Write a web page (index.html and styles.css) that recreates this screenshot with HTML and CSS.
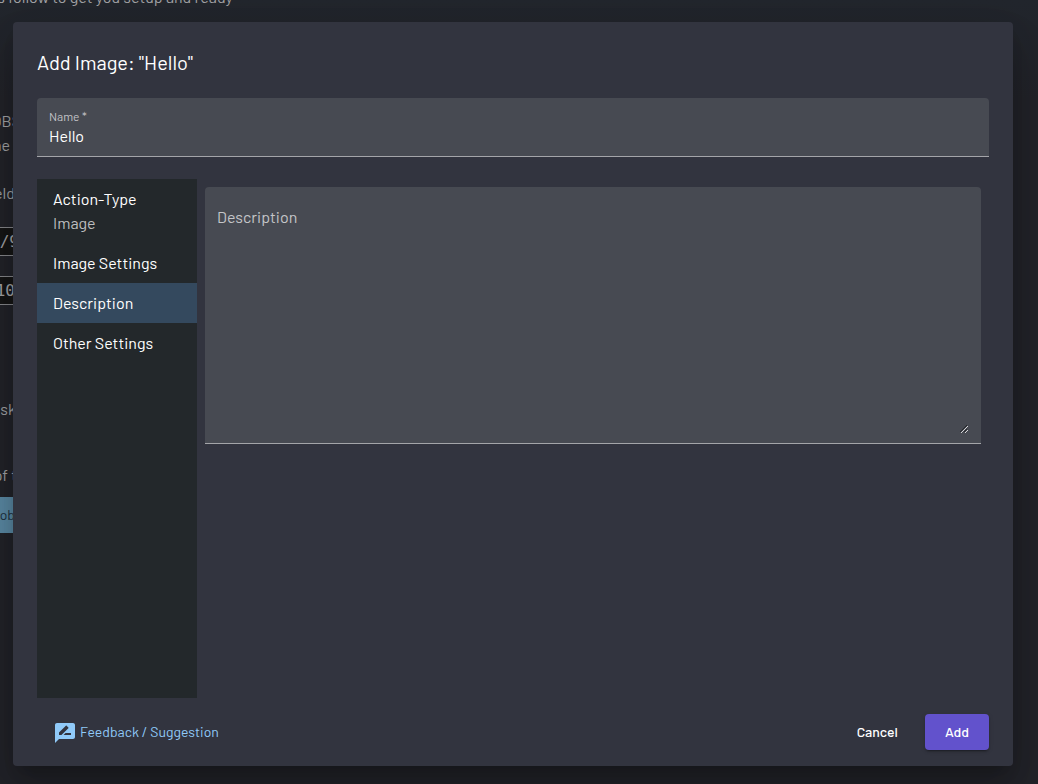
FILE: index.html
```
<!DOCTYPE html>
<html lang="en">
<head>
<meta charset="utf-8">
<meta name="viewport" content="width=device-width, initial-scale=1">
<title>Add Image</title>
<link rel="stylesheet" href="styles.css">
</head>
<body>
<div class="page" aria-hidden="true">
  <p class="intro">s follow to get you setup and ready</p>
  <div class="rail">
    <p class="line line-obs">OBS</p>
    <p class="line line-short">he</p>
    <p class="line line-gap">eld</p>
    <code class="code code-wide">/9</code>
    <code class="code">10</code>
    <p class="line line-task">sk</p>
    <p class="line line-of">of t</p>
    <span class="job">ob</span>
  </div>
</div>
<div class="overlay">
  <form class="dialog" role="dialog" aria-labelledby="title">
    <h1 class="title" id="title">Add Image: "Hello"</h1>
    <div class="field">
      <label class="field-label" for="name">Name *</label>
      <input class="field-input" id="name" type="text" value="Hello">
    </div>
    <div class="content">
      <nav class="menu">
        <button class="item" type="button">Action-Type<span class="item-sub">Image</span></button>
        <button class="item" type="button">Image Settings</button>
        <button class="item item-active" type="button">Description</button>
        <button class="item" type="button">Other Settings</button>
      </nav>
      <div class="panel">
        <div class="area">
          <textarea class="area-input" aria-label="Description" placeholder="Description"></textarea>
          <svg class="grip" viewBox="0 0 9 9" aria-hidden="true"><path d="M0 7L7 0M4 7L7 4" stroke="#25272b"/><path d="M1 8L8 1M5 8L8 5" stroke="#d5d5d7"/></svg>
        </div>
      </div>
    </div>
    <div class="actions">
      <a class="feedback" href="#feedback">
        <svg class="feedback-icon" viewBox="0 0 24 24" aria-hidden="true"><path fill="currentColor" d="M20 2H4c-1.100 0-2 .9-2 2v18l4-4h14c1.100 0 2-.9 2-2V4c0-1.100-.9-2-2-2zM6 14v-2.470l6.880-6.880c.2-.2.510-.2.710 0l1.770 1.770c.2.2.2.510 0 .710L8.470 14H6zm12 0h-7.500l2-2H18v2z"/></svg>
        <span class="feedback-text">Feedback / Suggestion</span>
      </a>
      <button class="button" type="button">Cancel</button>
      <button class="button button-primary" type="submit">Add</button>
    </div>
  </form>
</div>
</body>
</html>
```
FILE: styles.css
```
* { box-sizing: border-box; }
body {
  margin: 0;
  min-height: 100vh;
  overflow: hidden;
  background: #202127;
  color: #fff;
  font: 400 16px/24px Barlow, Roboto, sans-serif;
}
p, h1 { margin: 0; }
button, input, textarea { font: inherit; color: inherit; border: 0; background: none; }
.page {
  position: absolute;
  inset: 0;
  overflow: hidden;
  color: #a2a3a6;
  background: linear-gradient(#22262d, #222329 100px);
}
.intro { width: 233px; height: 9px; display: flex; align-items: flex-end; justify-content: flex-end; white-space: nowrap; }
.rail { width: 15px; padding-top: 100px; display: flex; flex-direction: column; align-items: flex-end; white-space: nowrap; }
.line-obs { margin-right: -6px; }
.line-short { margin-right: 5px; }
.line-gap { margin: 24px 0 22px; }
.code {
  height: 29px;
  width: 60px;
  margin-bottom: 20px;
  border: solid #85868a;
  border-width: 1px 0;
  background: #161616;
  font: 16px/28px "DejaVu Sans Mono", monospace;
  text-align: right;
}
.code-wide { margin-right: -4px; }
.line-task { margin: 72px -1px 0 0; }
.line-of { margin: 42px -2px 10px 0; }
.job { width: 60px; height: 36px; background: #5a89a4; color: #20313e; font-size: 14px; line-height: 36px; text-align: right; }
.overlay { position: relative; display: flex; min-height: 100vh; padding: 22px 25px 18px 13px; }
.dialog {
  flex: 1;
  display: flex;
  flex-direction: column;
  padding: 24px 24px 16px;
  border-radius: 4px;
  background: #32343f;
  box-shadow: 0 11px 15px -7px #0003, 0 24px 38px 3px #00000024, 0 9px 46px 8px #0000001f;
}
.title { margin: 0 0 20px; font-size: 20px; line-height: 32px; font-weight: 400; }
.field {
  display: flex;
  flex-direction: column;
  height: 59px;
  padding: 12px 12px 0;
  border-bottom: 1px solid #a4a5a9;
  border-radius: 4px 4px 0 0;
  background: #474a52;
}
.field-label { margin-bottom: 2px; font-size: 12px; line-height: 12px; color: #c4c5c8; }
.field-input { width: 100%; height: 24px; padding: 0; outline: 0; }
.content { flex: 1; display: flex; margin-top: 22px; }
.menu { width: 160px; background: #23282b; }
.item { display: block; width: 100%; padding: 8px 16px; text-align: left; cursor: pointer; }
.item-sub { display: block; color: #bdbebf; }
.item-active { background: #34495e; }
.panel { flex: 1; padding: 8px; }
.area {
  position: relative;
  height: 257px;
  padding: 18px 12px 8px;
  border-bottom: 1px solid #a4a5a9;
  border-radius: 4px 4px 0 0;
  background: #474a52;
}
.area-input { display: block; width: 100%; height: 100%; padding: 0; resize: none; outline: 0; }
.area-input::placeholder { color: #c4c5c8; opacity: 1; }
.grip { position: absolute; right: 12px; bottom: 9px; width: 9px; height: 9px; fill: none; }
.actions { display: flex; align-items: center; gap: 8px; padding-top: 16px; font-size: 14px; line-height: 36px; }
.feedback { display: flex; align-items: center; gap: 3px; margin: 0 auto 0 16px; color: #90caf9; text-decoration: none; }
.feedback-icon { width: 24px; height: 24px; margin-top: 2px; }
.button { height: 36px; padding: 0 19px; border-radius: 4px; font-weight: 500; cursor: pointer; }
.button-primary { padding: 0 20px; background: #6252cc; box-shadow: 0 3px 1px -2px #0003, 0 2px 2px #00000024, 0 1px 5px #0000001f; }
```
